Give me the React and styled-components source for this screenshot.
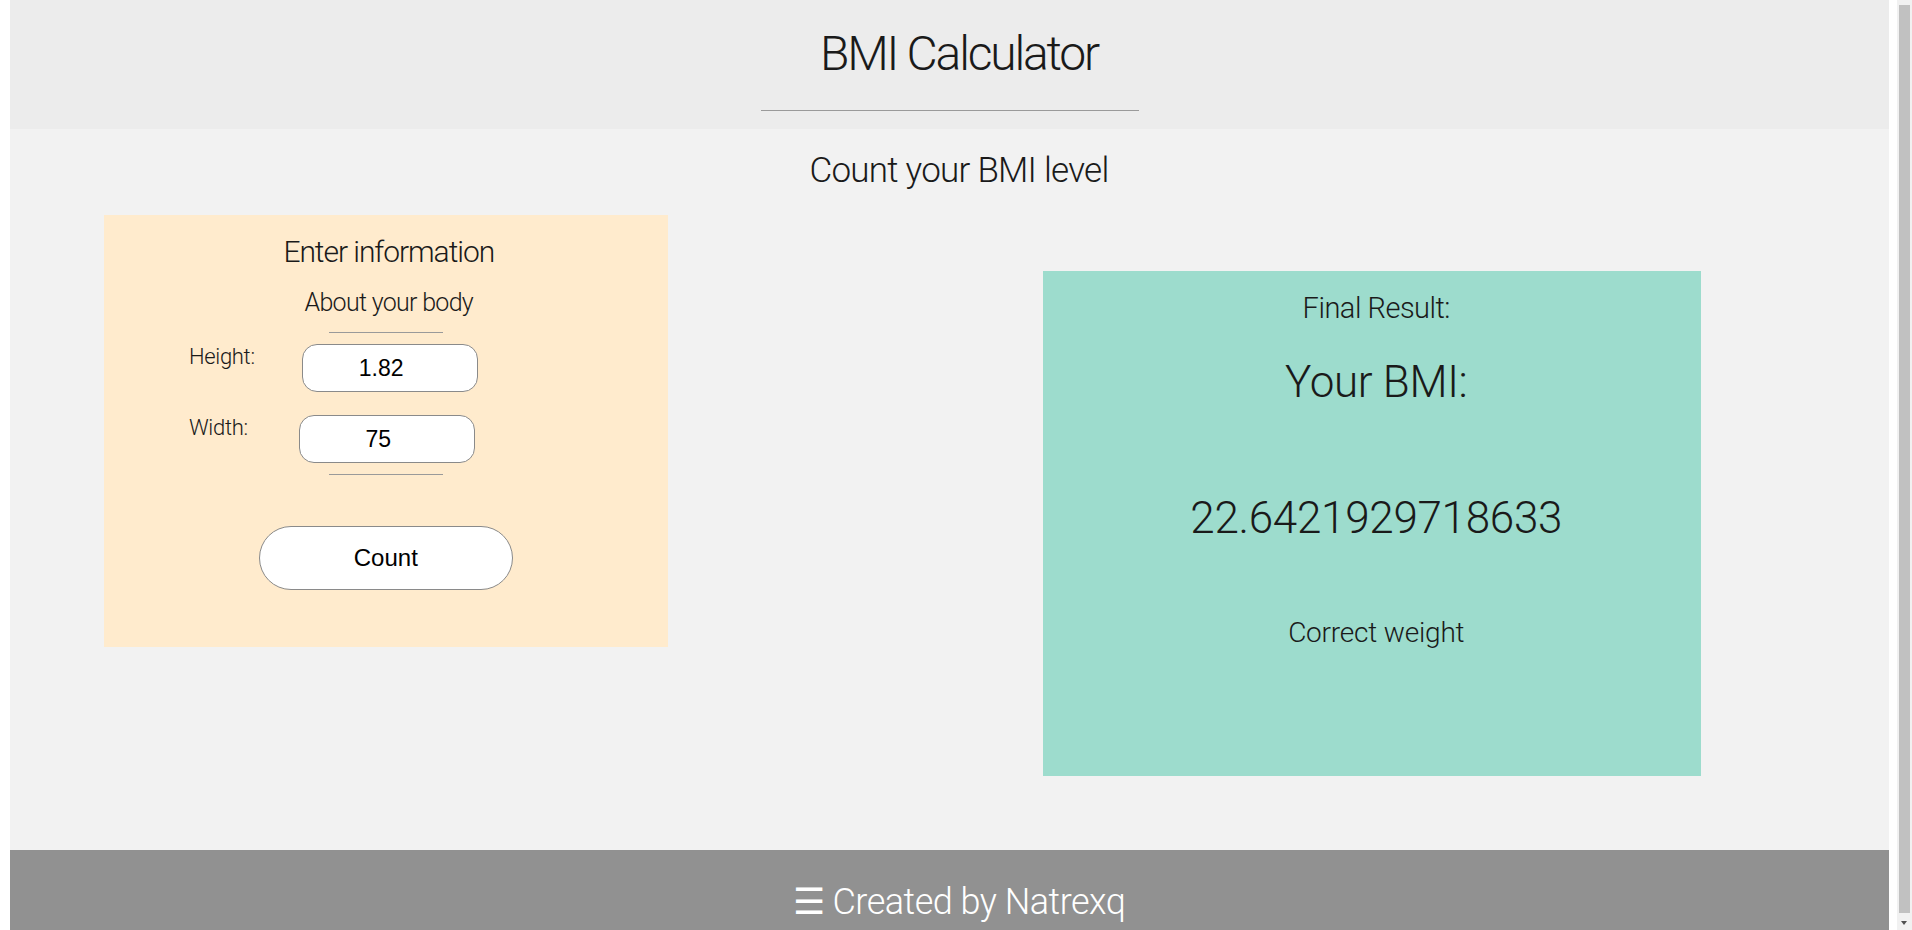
import React from "react";
import styled, { createGlobalStyle } from "styled-components";

const GlobalStyle = createGlobalStyle`
  html { background: #ffffff; }
  body {
    margin: 0 23px 8px 10px;
    font-family: "Roboto Light", Roboto, "Noto Sans", sans-serif;
    font-weight: 300;
    color: #1a1a1a;
  }
  * { box-sizing: border-box; }
`;

const ScrollTrack = styled.div`
  position: fixed;
  top: 0;
  right: 0;
  width: 15px;
  height: 100vh;
  background: #f1f1f1;
  pointer-events: none;
`;

const ScrollThumb = styled.div`
  position: absolute;
  top: 5px;
  bottom: 17px;
  left: 2px;
  right: 2px;
  background: #c1c1c1;
`;

const ScrollArrow = styled.div`
  position: absolute;
  bottom: 5px;
  left: 4px;
  width: 0;
  height: 0;
  border-left: 3.5px solid transparent;
  border-right: 3.5px solid transparent;
  border-top: 4px solid #505050;
`;

const Header = styled.header`
  background: #ececec;
  height: 129px;
  padding-top: 25px;
  display: flex;
  flex-direction: column;
  align-items: center;
`;

const Title = styled.h1`
  margin: 0;
  padding-left: 19px;
  font-size: 48px;
  line-height: 57.6px;
  font-weight: 300;
  letter-spacing: -2.2px;
`;

const Rule = styled.div`
  width: ${(p) => p.$w}px;
  height: 1px;
  background: #9a9a9a;
  margin: ${(p) => p.$m};
`;

const Main = styled.main`
  background: #f2f2f2;
  padding: 21px 0 74px;
`;

const Subtitle = styled.h2`
  margin: 0;
  padding-left: 19px;
  text-align: center;
  font-size: 35px;
  line-height: 42px;
  font-weight: 300;
  letter-spacing: -0.75px;
`;

const Columns = styled.div`
  display: grid;
  grid-template-columns: 1fr 1fr;
  margin-top: 23px;
  align-items: start;
`;

const InfoCard = styled.section`
  width: 60%;
  margin-left: 10%;
  background: #ffebcd;
  padding: 19px 0 57px;
  display: flex;
  flex-direction: column;
  align-items: center;
`;

const CardTitle = styled.h3`
  margin: 0;
  padding-left: 6px;
  font-size: 30px;
  line-height: 36px;
  font-weight: 300;
  letter-spacing: -1.05px;
`;

const CardSub = styled.p`
  margin: 18px 0 0;
  padding-left: 6px;
  font-size: 25px;
  line-height: 30px;
  letter-spacing: -0.7px;
`;

const Field = styled.div`
  align-self: stretch;
  display: flex;
  align-items: flex-start;
  padding-left: 85px;
  margin-top: ${(p) => p.$top}px;
`;

const Label = styled.label`
  font-size: 22px;
  line-height: 26px;
  letter-spacing: -0.3px;
  margin-right: ${(p) => p.$gap}px;
`;

const Input = styled.input`
  width: 176px;
  height: 48px;
  border: 1px solid #8a8a8a;
  border-radius: 15px;
  background: #fff;
  font-family: "Liberation Sans", Arial, sans-serif;
  font-size: 23px;
  color: #000;
  text-align: center;
  padding: 0 17px 0 0;
  outline: none;
`;

const CountButton = styled.button`
  margin-top: 51px;
  width: 254px;
  height: 64px;
  border: 1px solid #8a8a8a;
  border-radius: 32px;
  background: #fff;
  font-family: "Liberation Sans", Arial, sans-serif;
  font-size: 24px;
  color: #000;
  cursor: pointer;
`;

const ResultCard = styled.section`
  width: 70%;
  margin-left: 10%;
  margin-top: 56px;
  height: 505px;
  background: #9ddccd;
  padding-top: 20px;
  display: flex;
  flex-direction: column;
  align-items: center;
`;

const ResultText = styled.p`
  margin: ${(p) => p.$top}px 0 0;
  padding-left: 8px;
  font-size: ${(p) => p.$size}px;
  line-height: ${(p) => p.$size * 1.2}px;
  letter-spacing: ${(p) => p.$ls}px;
  font-weight: 300;
`;

const Footer = styled.footer`
  background: #919191;
  height: 100px;
  padding-top: 31px;
  padding-left: 19px;
  text-align: center;
  color: #fff;
  font-size: 36px;
  line-height: 43px;
  font-weight: 300;
  letter-spacing: -0.5px;
`;

export default function App() {
  return (
    <>
      <GlobalStyle />
      <Header>
        <Title>BMI Calculator</Title>
        <Rule $w={378} $m="27px 0 0" />
      </Header>
      <Main>
        <Subtitle>Count your BMI level</Subtitle>
        <Columns>
          <InfoCard>
            <CardTitle>Enter information</CardTitle>
            <CardSub>About your body</CardSub>
            <Rule $w={114} $m="14px 0 0" />
            <Field $top={11}>
              <Label $gap={47}>Height:</Label>
              <Input defaultValue="1.82" />
            </Field>
            <Field $top={23}>
              <Label $gap={51}>Width:</Label>
              <Input defaultValue="75" />
            </Field>
            <Rule $w={114} $m="11px 0 0" />
            <CountButton>Count</CountButton>
          </InfoCard>
          <ResultCard>
            <ResultText $size={29} $top={0} $ls={-0.5}>Final Result:</ResultText>
            <ResultText $size={44} $top={30} $ls={-0.33}>Your BMI:</ResultText>
            <ResultText $size={44} $top={83} $ls={-0.3}>22.6421929718633</ResultText>
            <ResultText $size={28} $top={72} $ls={-0.2}>Correct weight</ResultText>
          </ResultCard>
        </Columns>
      </Main>
      <Footer>☰ Created by Natrexq</Footer>
      <ScrollTrack>
        <ScrollThumb />
        <ScrollArrow />
      </ScrollTrack>
    </>
  );
}
